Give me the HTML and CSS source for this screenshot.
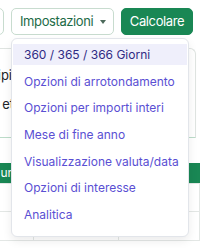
FILE: index.html
```html
<!DOCTYPE html>
<html lang="it">

<head>
    <meta charset="UTF-8">
    <meta name="viewport" content="width=device-width, initial-scale=1.0">
    <title>Calcolatore</title>
    <link rel="stylesheet" href="styles.css">
</head>

<body>
    <header class="toolbar">
        <button class="btn btn-outline btn-cut">Esporta</button>
        <button class="btn btn-outline btn-settings">Impostazioni<span class="caret"></span></button>
        <button class="btn btn-success">Calcolare</button>
    </header>

    <section class="panel">
        <div class="field"><label>Tipi</label></div>
        <div class="field"><label>Anni etc</label></div>
    </section>

    <table class="grid">
        <thead>
            <tr><th>unità</th><th></th><th></th></tr>
        </thead>
        <tbody>
            <tr><td></td><td></td><td></td></tr>
            <tr><td></td><td></td><td></td></tr>
        </tbody>
    </table>

    <nav class="dropdown-menu">
        <a href="#" class="active">360 / 365 / 366 Giorni</a>
        <a href="#">Opzioni di arrotondamento</a>
        <a href="#">Opzioni per importi interi</a>
        <a href="#">Mese di fine anno</a>
        <a href="#">Visualizzazione valuta/data</a>
        <a href="#">Opzioni di interesse</a>
        <a href="#">Analitica</a>
    </nav>
</body>

</html>
```

FILE: styles.css
```css
html {
    box-sizing: border-box;
    font-family: Inter, "Liberation Sans", sans-serif;
    font-size: 14px;
}

*,
*:before,
*:after {
    box-sizing: inherit;
}

body {
    margin: 0;
    width: 200px;
    height: 248px;
    overflow: hidden;
    position: relative;
    background: #fff;
    color: #212529;
}

.toolbar {
    display: flex;
    gap: 7px;
    padding-top: 8px;
    margin-left: -66px;
}

.btn {
    flex-shrink: 0;
    height: 27px;
    padding: 0 7px 0 8px;
    border-radius: 5px;
    font-family: inherit;
    font-size: 13px;
    letter-spacing: -.4px;
    line-height: 25px;
    white-space: nowrap;
    display: flex;
    align-items: center;
}

.btn-outline {
    background: #fff;
    border: 1px solid #c8dccf;
    color: #1d6b47;
}

.btn-cut {
    width: 70px;
    overflow: hidden;
}

.btn-settings {
    width: 103px;
    justify-content: space-between;
}

.caret {
    display: inline-block;
    border-left: 3.5px solid transparent;
    border-right: 3.5px solid transparent;
    border-top: 4px solid #4d6a5b;
}

.btn-success {
    width: 72px;
    justify-content: center;
    background: #198754;
    border: 1px solid #198754;
    color: #fff;
    padding: 0;
}

.panel {
    margin: 13px 4px 0 -30px;
    height: 90px;
    border: 1px solid #dfe4e1;
    border-bottom-color: #bcdcc9;
    border-radius: 6px 6px 0 0;
    padding-top: 18px;
}

.field {
    display: flex;
    height: 29px;
}

.field label {
    width: 41px;
    text-align: right;
    white-space: nowrap;
    font-size: 13px;
}

.grid {
    margin-top: 25px;
    width: 206px;
    margin-left: -6px;
    border-collapse: collapse;
}

.grid th {
    background: #198754;
    color: #fff;
    height: 20px;
    font-weight: normal;
    font-size: 12px;
    text-align: left;
    padding: 0;
}

.grid th:first-child {
    width: 39px;
    padding-left: 6px;
}

.grid th:nth-child(2) {
    width: 85px;
}

.grid td {
    height: 28.5px;
    border: 1px solid #e3e7e5;
}

.dropdown-menu {
    position: absolute;
    top: 38px;
    left: 11px;
    width: 178px;
    height: 199px;
    background: #fff;
    border: 1px solid #e2e5ea;
    border-radius: 6px;
    box-shadow: 0 4px 10px rgba(0, 0, 0, .08);
    padding: 5px 1px 4px;
    display: flex;
    flex-direction: column;
    gap: 5.7px;
}

.dropdown-menu a {
    display: block;
    height: 21px;
    line-height: 21px;
    padding: 0 11px;
    font-size: 12px;
    color: #5a4fd3;
    text-decoration: none;
    white-space: nowrap;
}

.dropdown-menu a.active {
    background: #efeffb;
    color: #2f2b84;
}
```
